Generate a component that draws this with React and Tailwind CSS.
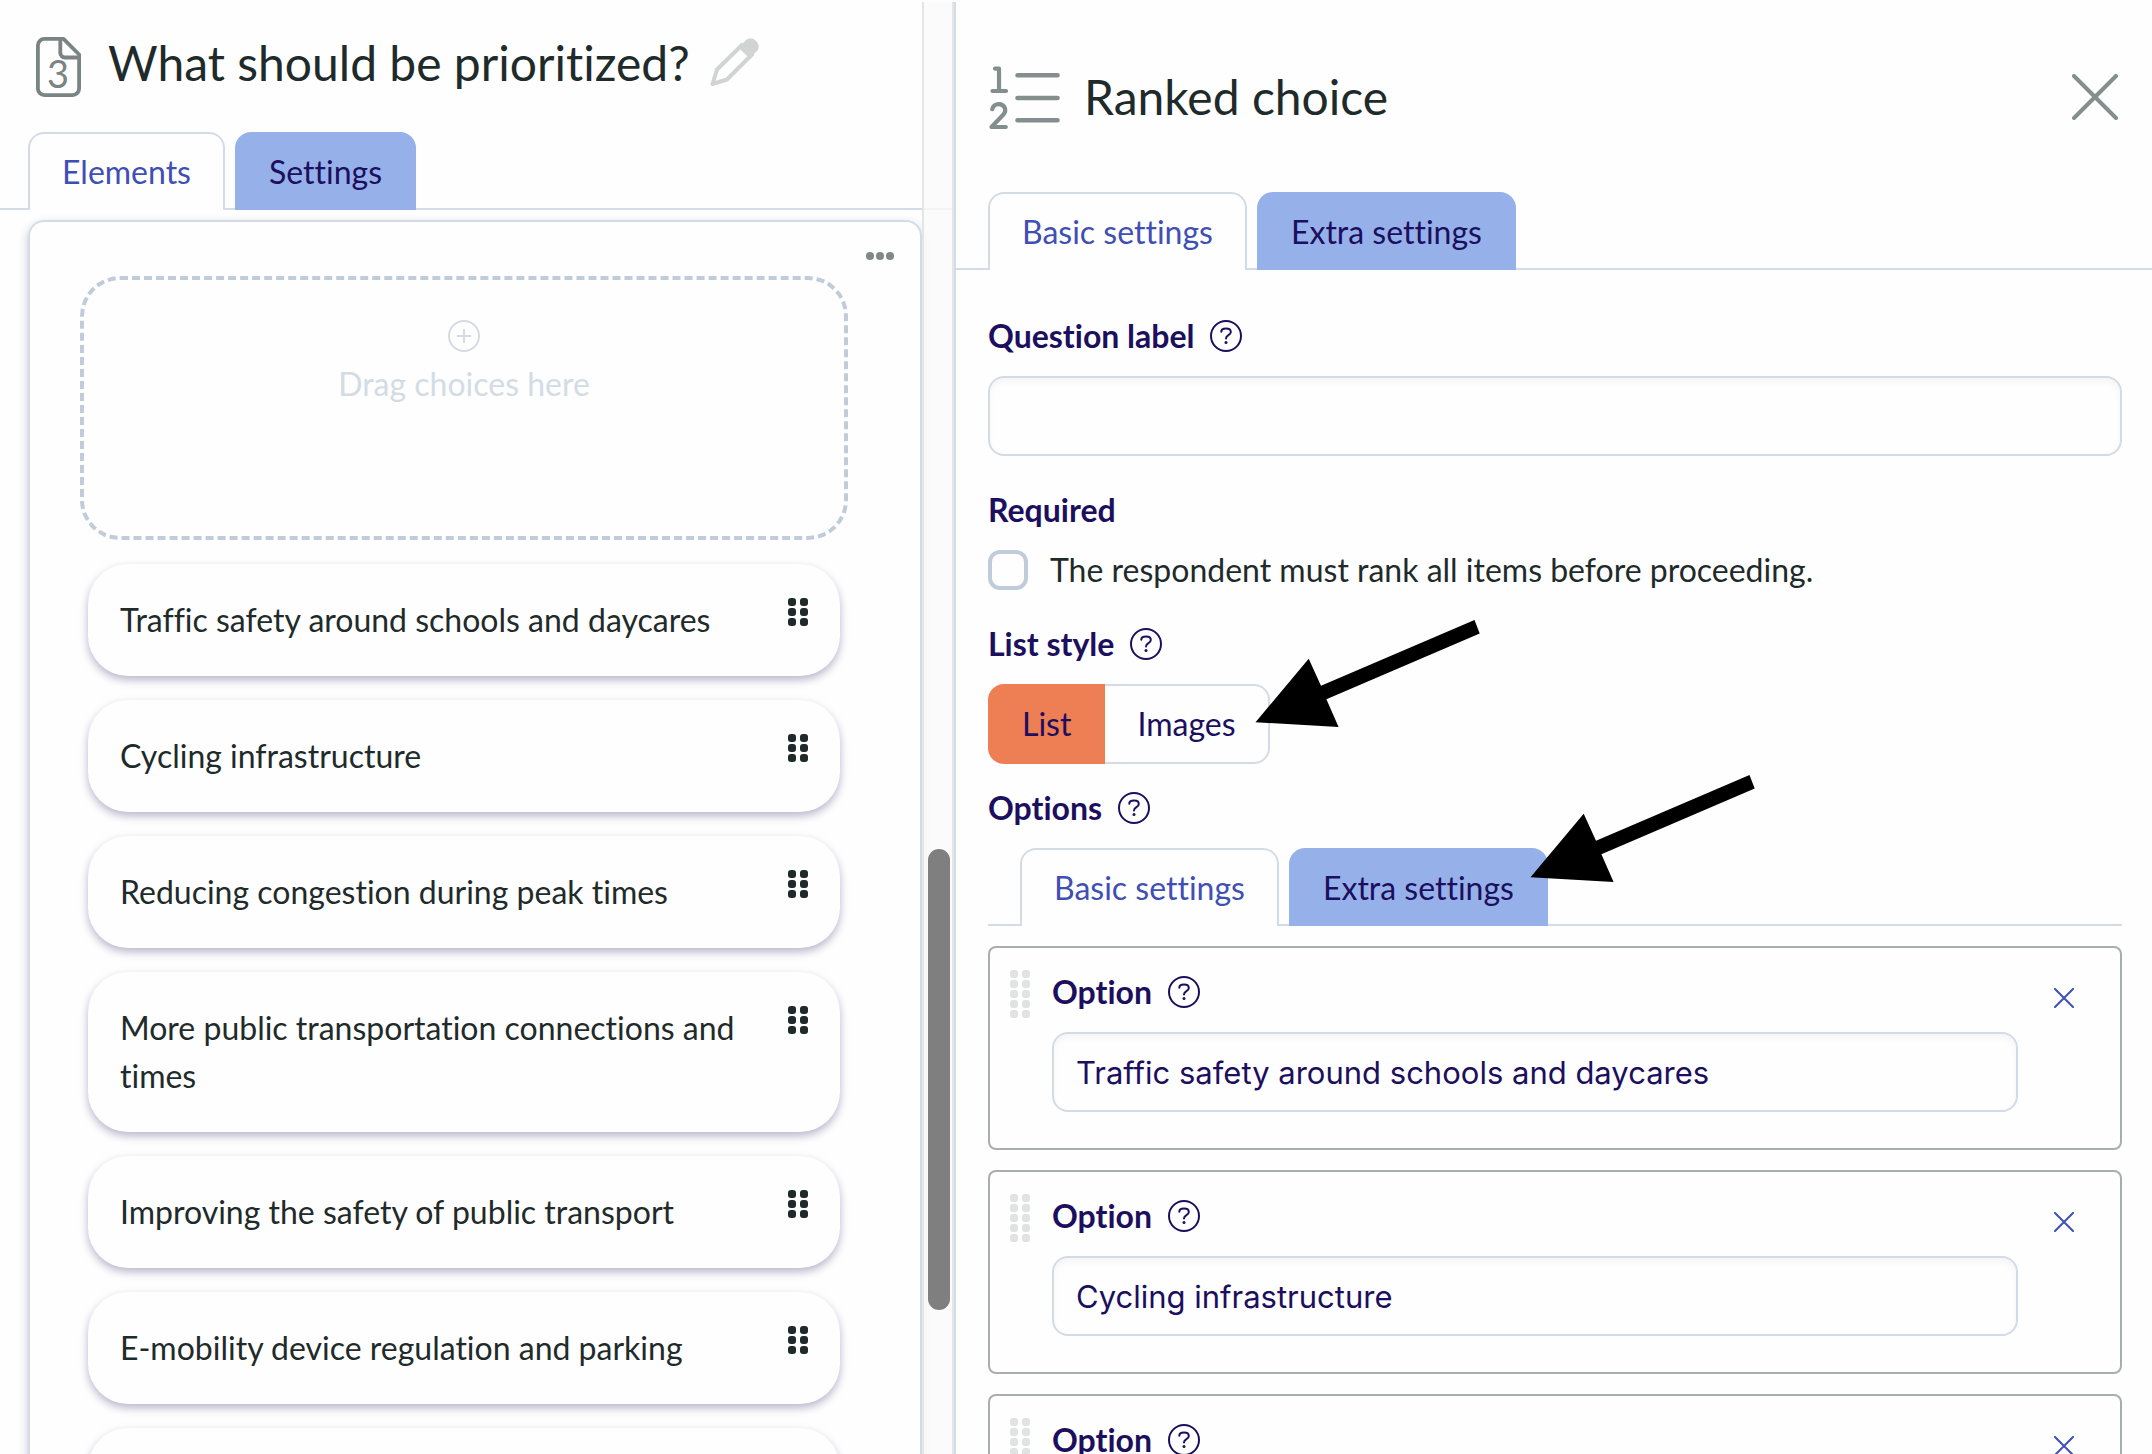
import React, { useState } from "react";
import clsx from "clsx";

const choices = [
  "Traffic safety around schools and daycares",
  "Cycling infrastructure",
  "Reducing congestion during peak times",
  "More public transportation connections and times",
  "Improving the safety of public transport",
  "E-mobility device regulation and parking",
  "Affordable public transport",
];

const PageIcon = ({ number }) => (
  <svg width="46" height="62" viewBox="0 0 46 62" fill="none" stroke="#7a8482" strokeWidth="3.8" aria-hidden="true">
    <path d="M27.500 1.900H8.400a6.500 6.500 0 0 0-6.500 6.500v43.200a6.500 6.500 0 0 0 6.500 6.500h28.200a6.500 6.500 0 0 0 6.500-6.500V17.500z" strokeLinejoin="round" />
    <path d="M24.300 2v14a4.500 4.500 0 0 0 4.500 4.500h14.200" />
    <text x="22" y="51" textAnchor="middle" fontFamily="Lato, sans-serif" fontSize="38" fill="#7a8482" stroke="none">
      {number}
    </text>
  </svg>
);

const PencilIcon = () => (
  <svg width="50" height="50" viewBox="0 0 50 50" aria-hidden="true">
    <path d="M33 7 7 32.500 2.500 47l14.500-4.500L43 16.500" fill="none" stroke="#d0d5d4" strokeWidth="4" strokeLinejoin="round" />
    <path d="M28.500 10.500 36 3a6.500 6.500 0 0 1 9 0l2 2a6.500 6.500 0 0 1 0 9l-7.500 7.500z" fill="#d0d5d4" />
  </svg>
);

const RankIcon = () => (
  <svg width="72" height="66" viewBox="0 0 72 66" fill="none" stroke="#848e8c" strokeLinecap="round" strokeLinejoin="round" aria-hidden="true">
    <path d="M29.500 11.300h40M29.500 34h40M29.500 56.300h40" strokeWidth="4.600" />
    <path d="M7 4.600h4v22M4.500 27h13.500" strokeWidth="4.200" />
    <path d="M4.200 45.200a6.800 6.800 0 0 1 12.700-1.200c1 2.500 0 4.800-1.700 6.800L3.500 63h14.300" strokeWidth="4.200" />
  </svg>
);

const CrossIcon = ({ size, width }) => (
  <svg width={size} height={size} viewBox={`0 0 ${size} ${size}`} fill="none" stroke="currentColor" strokeWidth={width} strokeLinecap="round" aria-hidden="true">
    <path d={`M${width / 2} ${width / 2} ${size - width / 2} ${size - width / 2}M${size - width / 2} ${width / 2} ${width / 2} ${size - width / 2}`} />
  </svg>
);

const Grip = ({ rows, className }) => (
  <svg width="20" height={rows * 10 - 2} className={className} fill="currentColor" aria-hidden="true">
    {Array.from({ length: rows }, (_, i) => (
      <g key={i}>
        <rect x="0" y={i * 10} width="8" height="8" rx="3" />
        <rect x="12" y={i * 10} width="8" height="8" rx="3" />
      </g>
    ))}
  </svg>
);

const Help = ({ topic }) => (
  <button type="button" aria-label={`Help: ${topic}`} className="text-[#1b0f5e]">
    <svg width="32" height="32" viewBox="0 0 32 32" fill="none" stroke="currentColor" strokeWidth="2" aria-hidden="true">
      <circle cx="16" cy="16" r="15" />
      <path d="M11.300 11.800c0-2 2-3.200 4.700-3.200s4.800 1.300 4.800 3.400c0 3.400-4.800 3-4.800 6.500" strokeLinecap="round" />
      <circle cx="16" cy="22.500" r="1.500" fill="currentColor" stroke="none" />
    </svg>
  </button>
);

// Hand drawn pointer, the tip is at the lower left corner
const Arrow = ({ className }) => (
  <svg width="226" height="108" viewBox="0 0 226 108" className={clsx("pointer-events-none absolute z-10", className)} aria-hidden="true">
    <path d="M0.500 102.300 53.700 38.700 66 65.700 219.500 0l5.200 13.600L71.400 79.300 83.600 107z" fill="#000" />
  </svg>
);

const Tabs = ({ tabs, className, arrow }) => {
  const [active, setActive] = useState(tabs[0]);

  return (
    <div role="tablist" className={clsx("flex gap-2.5 border-b-2 border-[#d3dce5]", className)}>
      {tabs.map((tab, i) => (
        <div key={tab} className="relative -mb-0.5">
          <button
            type="button"
            role="tab"
            aria-selected={active === tab}
            onClick={() => setActive(tab)}
            className={clsx(
              "h-[78px] rounded-t-2xl border-2 border-b-0 px-8",
              active === tab
                ? "border-[#d3dce5] bg-[#fefefe] text-[#3f4fb3]"
                : "border-[#96b1ea] bg-[#96b1ea] text-[#1b0f5e]"
            )}
          >
            {tab}
          </button>
          {arrow && i === tabs.length - 1 && <Arrow className="-top-[73px] left-[241px]" />}
        </div>
      ))}
    </div>
  );
};

const inputClass =
  "block h-20 w-full rounded-2xl border-2 border-[#d3dce5] bg-[#fefefe] px-[22px] font-[Inter,sans-serif] text-[31px] text-[#1b0f5e] shadow-[inset_0_4px_6px_rgba(0,0,0,0.04)] outline-none";

const Option = ({ index, value }) => {
  const [text, setText] = useState(value);
  const id = `option-${index}`;

  return (
    <li className="flex rounded-lg border-2 border-[#a8aeac] px-5 pt-5 pb-9">
      <Grip rows={5} className="mt-0.5 text-[#dfe3e2]" />
      <div className="ml-[22px] flex-1">
        <div className="mb-4 flex items-center gap-4">
          <label htmlFor={id} className="font-bold text-[#1b0f5e]">Option</label>
          <Help topic="Option" />
        </div>
        <input id={id} value={text} onChange={(e) => setText(e.target.value)} className={inputClass} />
      </div>
      <button type="button" aria-label="Remove option" className="mt-5 mr-[26px] ml-9 self-start text-[#3f4fb3]">
        <CrossIcon size={20} width={2} />
      </button>
    </li>
  );
};

const Preview = () => (
  <section className="relative flex flex-col overflow-hidden border-r-2 border-[#d3dce5]">
    <header className="flex h-[130px] shrink-0 items-start pt-[35px] pl-9">
      <PageIcon number={3} />
      <h1 className="ml-[26px] text-5xl leading-[52px]">What should be prioritized?</h1>
      <button type="button" aria-label="Edit title" className="ml-5">
        <PencilIcon />
      </button>
    </header>
    <Tabs tabs={["Elements", "Settings"]} className="shrink-0 px-7" />

    <div className="mt-2.5 mr-8 ml-7 flex-1 rounded-t-2xl border-2 border-b-0 border-[#d3dce5] pr-[72px] pl-[50px] shadow-[0_4px_10px_rgba(27,15,94,0.25)]">
      <div className="-mr-[46px] flex h-[54px] items-start justify-end pt-[30px]">
        <button type="button" aria-label="More actions" className="flex gap-0.5">
          <span className="size-2 rounded-full bg-[#7f8987]" />
          <span className="size-2 rounded-full bg-[#7f8987]" />
          <span className="size-2 rounded-full bg-[#7f8987]" />
        </button>
      </div>
      <div className="flex h-66 flex-col items-center rounded-[40px] border-4 border-dashed border-[#c0ccda] pt-10 text-[#d3dce5]">
        <svg width="32" height="32" viewBox="0 0 32 32" fill="none" stroke="currentColor" strokeWidth="2" aria-hidden="true">
          <circle cx="16" cy="16" r="15" />
          <path d="M16 9v14M9 16h14" />
        </svg>
        <p className="mt-2">Drag choices here</p>
      </div>
      <ul className="mt-6 flex flex-col gap-6 px-2">
        {choices.map((choice) => (
          <li
            key={choice}
            className="flex justify-between rounded-[40px] p-8 shadow-[0_4px_8px_rgba(27,15,94,0.3)]"
          >
            <span className="max-w-[640px]">{choice}</span>
            <Grip rows={3} className="mt-0.5 shrink-0" />
          </li>
        ))}
      </ul>
    </div>

    {/* scrollbar */}
    <div className="absolute inset-y-0 right-0 w-8 border-x-2 border-[#e4e5e6] bg-[#fafafa]/80">
      <div className="absolute top-[58.3%] left-1 h-[31.8%] w-[22px] rounded-full bg-[#7f7f7f]" />
    </div>
  </section>
);

const QuestionSettings = () => {
  const [label, setLabel] = useState("");
  const [required, setRequired] = useState(false);
  const [listStyle, setListStyle] = useState("List");

  return (
    <section className="overflow-hidden">
      <header className="flex h-[190px] items-start pt-[62px] pr-[34px] pl-8">
        <RankIcon />
        <h2 className="ml-6 flex-1 text-5xl leading-[66px]">Ranked choice</h2>
        <button type="button" aria-label="Close" className="mt-2.5 text-[#848e8c]">
          <CrossIcon size={46} width={4} />
        </button>
      </header>
      <Tabs tabs={["Basic settings", "Extra settings"]} className="px-8" />

      <form className="pt-[42px] pr-[30px] pl-8" onSubmit={(e) => e.preventDefault()}>
        <div className="flex items-center gap-4">
          <label htmlFor="label" className="font-bold text-[#1b0f5e]">Question label</label>
          <Help topic="Question label" />
        </div>
        <input id="label" value={label} onChange={(e) => setLabel(e.target.value)} className={clsx("mt-4", inputClass)} />

        <p className="mt-[30px] font-bold text-[#1b0f5e]">Required</p>
        <label className="mt-3 flex items-center gap-[22px]">
          <input
            type="checkbox"
            checked={required}
            onChange={(e) => setRequired(e.target.checked)}
            className="size-10 appearance-none rounded-xl border-4 border-[#c0ccda] checked:bg-[#96b1ea]"
          />
          The respondent must rank all items before proceeding.
        </label>

        <div className="mt-[26px] flex items-center gap-4">
          <p className="font-bold text-[#1b0f5e]">List style</p>
          <Help topic="List style" />
        </div>
        <div className="relative mt-4 flex">
          {["List", "Images"].map((style) => (
            <button
              key={style}
              type="button"
              aria-pressed={listStyle === style}
              onClick={() => setListStyle(style)}
              className={clsx(
                "h-20 border-2 px-8 text-[#1b0f5e]",
                style === "List" ? "rounded-l-2xl" : "rounded-r-2xl border-l-0",
                listStyle === style ? "border-[#ee7e53] bg-[#ee7e53]" : "border-[#d3dce5]"
              )}
            >
              {style}
            </button>
          ))}
          <Arrow className="-top-16 left-[267px]" />
        </div>

        <div className="mt-5 flex items-center gap-4">
          <p className="font-bold text-[#1b0f5e]">Options</p>
          <Help topic="Options" />
        </div>
        <Tabs tabs={["Basic settings", "Extra settings"]} className="mt-4 px-8" arrow />
        <ul className="mt-5 flex flex-col gap-5">
          {choices.slice(0, 4).map((choice, i) => (
            <Option key={choice} index={i} value={choice} />
          ))}
        </ul>
      </form>
    </section>
  );
};

const App = () => {
  return (
    <div className="grid h-screen grid-cols-[239fr_299fr] overflow-hidden bg-[#fefefe] pt-0.5 font-[Lato,sans-serif] text-[32px] leading-12 text-[#1f2b2a] [font-variant-ligatures:none]">
      <Preview />
      <QuestionSettings />
    </div>
  );
};

export default App;
